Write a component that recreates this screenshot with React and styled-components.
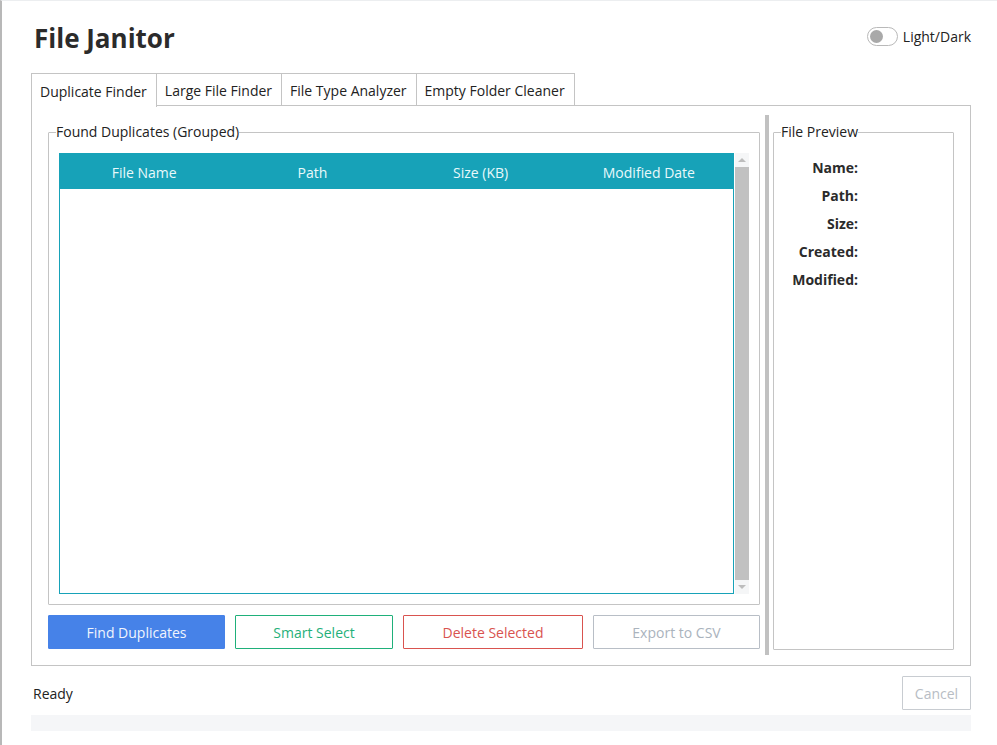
import React from "react";
import styled, { createGlobalStyle } from "styled-components";

const GlobalStyle = createGlobalStyle`
  html, body {
    margin: 0;
    padding: 0;
    background: #ffffff;
  }
  body {
    font-family: "Segoe UI", "Open Sans", "Noto Sans", sans-serif;
    color: #222;
  }
`;

const Window = styled.div`
  box-sizing: border-box;
  width: 997px;
  height: 745px;
  border-left: 2px solid #b8b8b8;
  border-top: 1px solid #eceef0;
  padding: 0 26px 0 29px;
  display: flex;
  flex-direction: column;
  overflow: hidden;
`;

const Header = styled.header`
  display: flex;
  align-items: flex-start;
  justify-content: space-between;
  height: 72px;
`;

const Title = styled.h1`
  margin: 19px 0 0 3px;
  font-size: 26px;
  font-weight: 700;
  color: #2b2b2b;
`;

const ToggleWrap = styled.label`
  display: flex;
  align-items: center;
  gap: 5px;
  margin-top: 26px;
  font-size: 14px;
  color: #222;
`;

const Switch = styled.span`
  box-sizing: border-box;
  width: 31px;
  height: 19px;
  border: 1px solid #b9b9b9;
  border-radius: 10px;
  display: flex;
  align-items: center;
  padding-left: 2px;
  &::before {
    content: "";
    width: 13px;
    height: 13px;
    border-radius: 50%;
    background: #a9a9a9;
  }
`;

const TabStrip = styled.div`
  display: flex;
  height: 33px;
`;

const Tab = styled.div`
  box-sizing: border-box;
  height: ${({ active }) => (active ? "34px" : "33px")};
  padding: 1px 9px 0 8px;
  display: flex;
  align-items: center;
  font-size: 14px;
  color: #222;
  background: #fff;
  border: 1px solid #c4c4c4;
  border-bottom: ${({ active }) => (active ? "none" : "1px solid #c4c4c4")};
  border-left: ${({ first }) => (first ? "1px solid #c4c4c4" : "none")};
  position: relative;
  z-index: ${({ active }) => (active ? 2 : 1)};
`;

const Panel = styled.div`
  box-sizing: border-box;
  height: 561px;
  border: 1px solid #c4c4c4;
  margin-top: -1px;
  display: flex;
  padding: 9px 16px 10px 16px;
`;

const LeftColumn = styled.div`
  width: 712px;
  display: flex;
  flex-direction: column;
  padding-top: 8px;
`;

const Group = styled.fieldset`
  box-sizing: border-box;
  margin: 0;
  min-width: 0;
  border: 1px solid #c4c4c4;
  border-radius: 1px;
  padding: ${({ pad }) => pad};
  height: ${({ h }) => h};
  width: ${({ w }) => w || "auto"};
  margin-top: ${({ mt }) => mt || "0"};
`;

const Legend = styled.legend`
  font-size: 14px;
  color: #222;
  padding: 0;
  margin-left: ${({ shift }) => shift};
  line-height: 18px;
`;

const TableArea = styled.div`
  display: flex;
  height: 441px;
  margin-top: 12px;
`;

const Table = styled.div`
  flex: 1;
  border: 1px solid #17a2b8;
`;

const HeaderRow = styled.div`
  display: grid;
  grid-template-columns: repeat(4, 1fr);
  height: 35px;
  padding-top: 1px;
  box-sizing: border-box;
  background: #17a2b8;
  color: #e9f9fb;
  font-size: 14px;
  align-items: center;
  text-align: center;
`;

const Scrollbar = styled.div`
  width: 14px;
  margin-left: 1px;
  background: #f5f6f7;
  display: flex;
  flex-direction: column;
`;

const ScrollArrow = styled.div`
  height: 14px;
  display: flex;
  align-items: center;
  justify-content: center;
  &::before {
    content: "";
    border-left: 4px solid transparent;
    border-right: 4px solid transparent;
    ${({ down }) =>
      down ? "border-top: 4px solid #bdbdbd;" : "border-bottom: 4px solid #bdbdbd;"}
  }
`;

const ScrollThumb = styled.div`
  flex: 1;
  background: #c1c1c1;
`;

const ButtonRow = styled.div`
  display: grid;
  grid-template-columns: 177px 158px 180px 167px;
  gap: 10px;
  margin-top: 10px;
`;

const Button = styled.button`
  box-sizing: border-box;
  height: 34px;
  font-family: inherit;
  font-size: 14px;
  border-radius: 1px;
  background: ${({ variant }) => (variant === "primary" ? "#4682e8" : "#fff")};
  color: ${({ variant }) =>
    ({
      primary: "#f1f5fd",
      success: "#1fb07a",
      danger: "#d9534f",
      muted: "#aab3bd",
    }[variant])};
  border: 1px solid
    ${({ variant }) =>
      ({
        primary: "#4682e8",
        success: "#1fb07a",
        danger: "#d9534f",
        muted: "#b8bec6",
      }[variant])};
`;

const Splitter = styled.div`
  width: 4px;
  background: #c1c1c1;
  margin: 0 4px 0 5px;
`;

const PreviewGrid = styled.div`
  display: grid;
  grid-template-columns: 76px 1fr;
  grid-auto-rows: 28px;
  margin-top: 17px;
`;

const FieldLabel = styled.div`
  text-align: right;
  font-size: 14px;
  font-weight: 700;
  color: #2b2b2b;
  line-height: 20px;
`;

const StatusRow = styled.div`
  display: flex;
  align-items: center;
  justify-content: space-between;
  padding: 10px 0 5px 2px;
`;

const StatusText = styled.span`
  font-size: 14px;
  color: #222;
`;

const CancelButton = styled.button`
  box-sizing: border-box;
  width: 69px;
  height: 34px;
  background: #fff;
  border: 1px solid #c8ccd1;
  border-radius: 1px;
  color: #b8bdc4;
  font-family: inherit;
  font-size: 14px;
`;

const ProgressBar = styled.div`
  height: 16px;
  background: #f5f6f8;
`;

const tabs = ["Duplicate Finder", "Large File Finder", "File Type Analyzer", "Empty Folder Cleaner"];
const columns = ["File Name", "Path", "Size (KB)", "Modified Date"];
const fields = ["Name:", "Path:", "Size:", "Created:", "Modified:"];

export default function App() {
  return (
    <>
      <GlobalStyle />
      <Window>
        <Header>
          <Title>File Janitor</Title>
          <ToggleWrap>
            <Switch />
            Light/Dark
          </ToggleWrap>
        </Header>
        <TabStrip>
          {tabs.map((t, i) => (
            <Tab key={t} active={i === 0} first={i === 0}>
              {t}
            </Tab>
          ))}
        </TabStrip>
        <Panel>
          <LeftColumn>
            <Group pad="0 10px 10px 10px" h="482px">
              <Legend shift="-3px">Found Duplicates (Grouped)</Legend>
              <TableArea>
                <Table>
                  <HeaderRow>
                    {columns.map((c) => (
                      <span key={c}>{c}</span>
                    ))}
                  </HeaderRow>
                </Table>
                <Scrollbar>
                  <ScrollArrow />
                  <ScrollThumb />
                  <ScrollArrow down />
                </Scrollbar>
              </TableArea>
            </Group>
            <ButtonRow>
              <Button variant="primary">Find Duplicates</Button>
              <Button variant="success">Smart Select</Button>
              <Button variant="danger">Delete Selected</Button>
              <Button variant="muted">Export to CSV</Button>
            </ButtonRow>
          </LeftColumn>
          <Splitter />
          <Group pad="0 8px" h="527px" w="181px" mt="8px">
            <Legend shift="-1px">File Preview</Legend>
            <PreviewGrid>
              {fields.map((f) => (
                <React.Fragment key={f}>
                  <FieldLabel>{f}</FieldLabel>
                  <span />
                </React.Fragment>
              ))}
            </PreviewGrid>
          </Group>
        </Panel>
        <StatusRow>
          <StatusText>Ready</StatusText>
          <CancelButton disabled>Cancel</CancelButton>
        </StatusRow>
        <ProgressBar />
      </Window>
    </>
  );
}
